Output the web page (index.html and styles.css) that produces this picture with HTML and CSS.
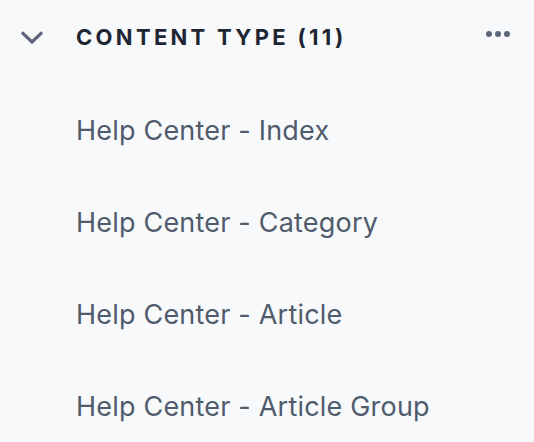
FILE: index.html
```html
<!DOCTYPE html>
<html lang="en">
<head>
<meta charset="utf-8">
<title>Content Type</title>
<link rel="stylesheet" href="styles.css">
</head>
<body>
<section class="group">
  <header class="group-header">
    <button class="toggle" aria-label="Collapse">
      <svg width="22" height="14" viewBox="0 0 22 14" aria-hidden="true">
        <path d="M2 2.5 L11 11 L20 2.5" fill="none" stroke="#5b6778" stroke-width="3.2" stroke-linecap="square" stroke-linejoin="miter"/>
      </svg>
    </button>
    <h2 class="group-title">CONTENT TYPE (11)</h2>
    <button class="more" aria-label="More options">
      <span class="dot"></span><span class="dot"></span><span class="dot"></span>
    </button>
  </header>
  <ul class="items">
    <li class="item">Help Center - Index</li>
    <li class="item">Help Center - Category</li>
    <li class="item">Help Center - Article</li>
    <li class="item">Help Center - Article Group</li>
  </ul>
</section>
</body>
</html>
```
FILE: styles.css
```css
html, body {
  margin: 0;
  padding: 0;
  background: #f8f9fb;
}
body {
  font-family: Inter, "Noto Sans", "Liberation Sans", sans-serif;
}
.group {
  display: flex;
  flex-direction: column;
}
.group-header {
  display: flex;
  align-items: center;
  height: 74px;
  padding: 0 24px 0 20px;
}
.toggle {
  display: flex;
  align-items: center;
  justify-content: center;
  width: 24px;
  height: 24px;
  padding: 0;
  border: 0;
  background: none;
  margin-right: 32px;
  margin-top: 2px;
}
.toggle svg { display: block; }
.group-title {
  margin: 0;
  flex: 1;
  font-size: 22px;
  font-weight: 700;
  letter-spacing: 3.3px;
  color: #1e2633;
  line-height: 30px;
}
.more {
  display: flex;
  gap: 3px;
  padding: 0;
  border: 0;
  background: none;
  margin-top: -6px;
}
.dot {
  width: 6px;
  height: 6px;
  border-radius: 50%;
  background: #5b6778;
}
.items {
  list-style: none;
  margin: 11px 0 0;
  padding: 0 0 0 76px;
}
.item {
  height: 92px;
  line-height: 92px;
  font-size: 27px;
  letter-spacing: 0.2px;
  color: #505c6c;
}
```
